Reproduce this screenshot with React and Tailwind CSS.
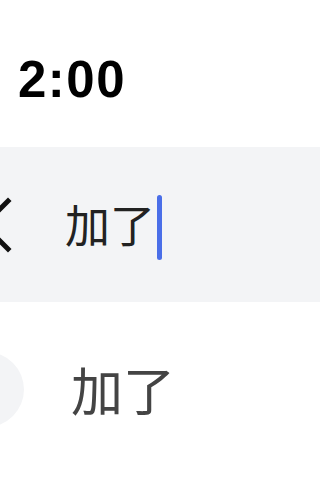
import React from 'react';

const App = () => {
    return (
        <div className="w-full min-w-[223px] h-[482px] overflow-hidden bg-white">
            <div className="h-[147px] pt-[54px] pl-[18px]">
                <div className="text-[51px] leading-none font-bold tracking-[1.5px] text-black font-['Liberation_Sans',Arial,sans-serif]">2:00</div>
            </div>

            <div className="h-[155px] bg-[#f3f4f6] flex items-center">
                <svg className="-ml-[20px] shrink-0" width="32" height="56" viewBox="0 0 32 56" fill="none">
                    <polyline points="28,4 4,28 28,52" stroke="#111" strokeWidth="5" strokeLinecap="square" />
                </svg>
                <span className="ml-[53px] -mt-[3px] text-[45px] leading-none text-[#222] font-['Noto_Sans_CJK_SC',sans-serif]">加了</span>
                <span className="ml-[2px] mt-[6px] w-[5px] h-[65px] rounded-full bg-[#4a6ee8]"></span>
            </div>

            <div className="h-[175px] flex items-center">
                <div className="-ml-[51px] shrink-0 w-[75px] h-[75px] rounded-full bg-[#f3f4f6]"></div>
                <span className="ml-[47px] -mt-[2px] text-[52px] leading-none text-[#444] font-['Noto_Sans_CJK_SC',sans-serif]">加了</span>
            </div>
        </div>
    );
};

export default App;
